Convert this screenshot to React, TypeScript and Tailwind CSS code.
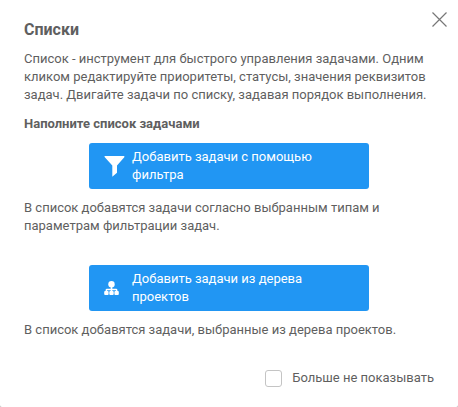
import React from 'react';

function FilterIcon() {
  return (
    <svg className="h-[22px] w-[22px] shrink-0" viewBox="0 0 22 22" fill="#fff">
      <path d="M.7 1H20Q20.800 1.300 20.300 2.200L13 10.500V17.800L8.300 21.700V10.500L.8 2.200Q.2 1.500.7 1Z" />
    </svg>
  );
}

function TreeIcon() {
  return (
    <svg className="h-4 w-4 shrink-0" viewBox="0 0 16 16" fill="#fff">
      <circle cx="7.500" cy="4.200" r="3.200" />
      <path d="M6.700 7h1.600v1.800H12q1.400 0 1.400 1.300V12h-1.500v-1.700H8.300V12H6.700v-1.700H3.100V12H1.600v-1.900Q1.600 8.800 3 8.800h3.700z" />
      <rect x=".2" y="11" width="4.400" height="4" rx="1" />
      <rect x="5.300" y="11" width="4.400" height="4" rx="1" />
      <rect x="10.400" y="11" width="4.400" height="4" rx="1" />
    </svg>
  );
}

export default function App() {
  return (
    <div className="h-[407px] w-[458px] overflow-hidden bg-[#bbb]">
      <div className="relative h-full overflow-hidden rounded-b-[2px] bg-white px-6 pt-5 font-['Roboto',sans-serif] text-[13px] leading-[18px] text-[#5f5f5f]">
        <button className="absolute left-[432px] top-[12px]" aria-label="Закрыть">
          <svg width="15" height="15" viewBox="0 0 15 15" stroke="#777" strokeWidth="1.2"><path d="M.5.5l14 14M14.500.5l-14 14" /></svg>
        </button>
        <h1 className="text-[16px] leading-5 font-bold">Списки</h1>
        <p className="mt-[10px] whitespace-nowrap">Список - инструмент для быстрого управления задачами. Одним<br />кликом редактируйте приоритеты, статусы, значения реквизитов<br />задач. Двигайте задачи по списку, задавая порядок выполнения.</p>
        <h2 className="mt-[11px] font-bold">Наполните список задачами</h2>
        <button className="mt-[10px] ml-[65px] flex h-[46px] w-[280px] items-center rounded-[3px] bg-[#2196f3] pl-[15px] text-left font-normal text-white">
          <FilterIcon />
          <span className="ml-[6px]">Добавить задачи с помощью<br />фильтра</span>
        </button>
        <p className="mt-[10px]">В список добавятся задачи согласно выбранным типам и<br />параметрам фильтрации задач.</p>
        <button className="mt-[30px] ml-[65px] flex h-[46px] w-[280px] items-center rounded-[3px] bg-[#2196f3] pl-[15px] text-left font-normal text-white">
          <TreeIcon />
          <span className="ml-[12px]">Добавить задачи из дерева<br />проектов</span>
        </button>
        <p className="mt-[10px]">В список добавятся задачи, выбранные из дерева проектов.</p>
        <label className="mt-[30px] flex items-center justify-end">
          <span className="mr-[10px] h-[17px] w-[17px] rounded-[3px] border border-[#c4c4c4]" />
          Больше не показывать
        </label>
      </div>
    </div>
  );
}
